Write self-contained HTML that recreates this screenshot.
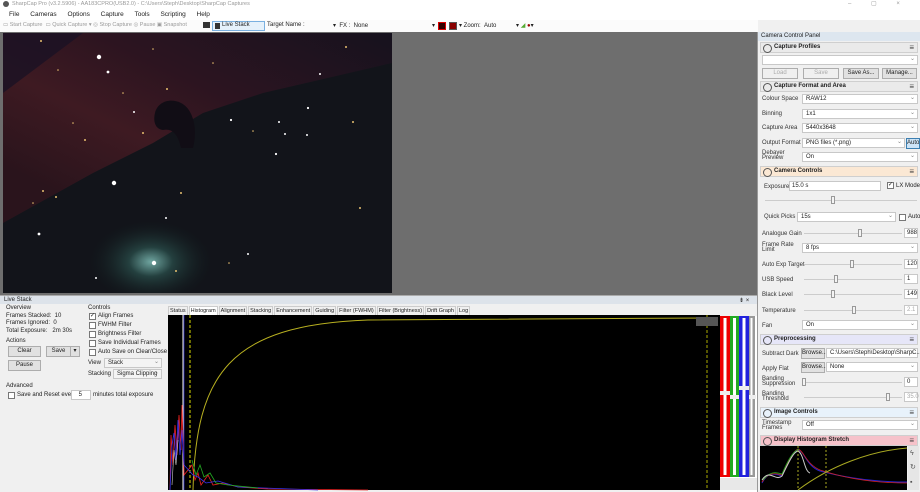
<!DOCTYPE html>
<html><head><meta charset="utf-8"><style>
*{margin:0;padding:0;box-sizing:border-box}
body{width:920px;height:492px;overflow:hidden;background:#f0f0f0;font-family:"Liberation Sans",sans-serif;font-size:6.5px;color:#222;position:relative}
.a{position:absolute;white-space:nowrap}
.cb{position:absolute;background:#fff;border:1px solid #c8c8c8;height:10px;padding-left:3px;line-height:8px;font-size:6px}
.cb:after{content:"⌄";position:absolute;right:2px;top:-1px;color:#888;font-size:6px}
.hd{position:absolute;left:760px;width:158px;height:11px;border:1px solid #cfcfcf;font-weight:bold;font-size:6px;line-height:9px;padding-left:13px}
.hd:before{content:"";position:absolute;left:2px;top:1px;width:7px;height:7px;border:1px solid #555;border-radius:50%}
.hd:after{content:"≡";position:absolute;right:3px;top:0;font-size:8px;line-height:9px;font-weight:normal;color:#444}
.lb{position:absolute;left:762px;font-size:6px;line-height:6px;color:#333}
.btn{position:absolute;background:#e1e1e1;border:1px solid #adadad;text-align:center;font-size:6px;line-height:9px}
.sl{position:absolute;height:1px;background:#ccc}
.th{position:absolute;width:4px;height:8px;background:#f4f4f4;border:1px solid #999}
.nb{position:absolute;background:#fff;border:1px solid #c8c8c8;height:10px;width:14px;font-size:6px;line-height:8px;padding-left:2px}
.chk{position:absolute;width:7px;height:7px;border:1px solid #777;background:#fff}
.tab{display:inline-block;border:1px solid #ccc;border-bottom:none;padding:0 1px;height:9px;line-height:9px;font-size:5.5px;background:#f0f0f0;margin-right:1px}
</style></head><body>
<div class="a" style="left:0;top:0;width:920px;height:9px;background:#fff"></div>
<div class="a" style="left:3px;top:1px;width:6px;height:6px;border-radius:50%;background:#555"></div>
<div class="a" style="left:12px;top:1px;font-size:5.5px;color:#999">SharpCap Pro (v3.2.5906) - AA183CPRO(USB2.0) - C:\Users\Steph\Desktop\SharpCap Captures</div>
<div class="a" style="left:848px;top:0;font-size:6px;color:#999;word-spacing:18px">– ▢ ×</div>
<div class="a" style="left:0;top:9px;width:920px;height:11px;background:#fff"></div>
<div class="a" style="left:9px;top:11px;font-size:6.5px;word-spacing:9px">File Cameras Options Capture Tools Scripting Help</div>
<div class="a" style="left:0;top:20px;width:758px;height:12px;background:#fbfbfb"></div>
<div class="a" style="left:3px;top:22px;font-size:5.5px;color:#999">▭ Start Capture &nbsp;▭ Quick Capture ▾ ◎ Stop Capture ◎ Pause ▣ Snapshot</div>
<div class="a" style="left:203px;top:22px;width:7px;height:6px;background:#333"></div>
<div class="a" style="left:212px;top:21px;width:53px;height:10px;border:1px solid #7ab0e0;background:#e5f1fb"></div>
<div class="a" style="left:215px;top:23px;width:5px;height:6px;background:#333"></div>
<div class="a" style="left:222px;top:22px;font-size:6px">Live Stack</div>
<div class="a" style="left:267px;top:22px;font-size:6px">Target Name :</div>
<div class="a" style="left:333px;top:22px;font-size:6px">▾ &nbsp;FX : &nbsp;None</div>
<div class="a" style="left:432px;top:22px;font-size:6px">▾</div>
<div class="a" style="left:438px;top:22px;width:8px;height:8px;background:#300;border:1px solid #d00"></div>
<div class="a" style="left:449px;top:22px;width:8px;height:8px;background:#800;border:1px solid #555"></div>
<div class="a" style="left:459px;top:22px;font-size:6px">▾ Zoom: &nbsp;Auto</div>
<div class="a" style="left:516px;top:22px;font-size:6px">▾ <span style="color:#5a3">◢</span> <span style="color:#900">●</span>▾</div>
<div class="a" style="left:0;top:32px;width:758px;height:263px;background:#6e6e6e"></div>
<svg class="a" style="left:3px;top:33px" width="389" height="260">
<defs>
<linearGradient id="r1" x1="0" y1="1" x2="1" y2="0"><stop offset="0.15" stop-color="#2a141c"/><stop offset="0.4" stop-color="#3e1a22"/><stop offset="0.62" stop-color="#2c1420"/><stop offset="1" stop-color="#16121e"/></linearGradient>
<radialGradient id="g1" cx="0.38" cy="0.88" r="0.16"><stop offset="0" stop-color="#6fa5a0"/><stop offset="0.35" stop-color="#24403f"/><stop offset="1" stop-color="#111a1c" stop-opacity="0"/></radialGradient>
</defs>
<rect width="389" height="260" fill="#12141a"/>
<polygon points="0,0 389,0 389,30 260,60 200,80 150,110 90,140 0,190" fill="url(#r1)"/>
<polygon points="0,0 80,0 0,60" fill="#1a1224" opacity="0.8"/>
<rect width="389" height="260" fill="url(#g1)"/>
<path d="M152,80 C155,68 168,65 178,70 C190,76 195,95 190,115 L178,115 C175,100 168,95 160,97 C152,96 150,88 152,80Z" fill="#110d15"/>
<g fill="#fff">
<circle cx="96" cy="24" r="2.2"/><circle cx="105" cy="39" r="1.4"/><circle cx="111" cy="150" r="2.2"/><circle cx="36" cy="201" r="1.4"/><circle cx="151" cy="230" r="2.2"/><circle cx="228" cy="87" r="1.1"/><circle cx="305" cy="75" r="1.1"/><circle cx="273" cy="121" r="1.1"/><circle cx="282" cy="101" r="1"/><circle cx="304" cy="102" r="1"/><circle cx="317" cy="41" r="1"/><circle cx="245" cy="221" r="1"/><circle cx="93" cy="245" r="1"/><circle cx="163" cy="185" r="1"/><circle cx="131" cy="79" r="1"/><circle cx="276" cy="89" r="1"/>
</g>
<g fill="#e8c070">
<circle cx="38" cy="8" r="1"/><circle cx="164" cy="56" r="1"/><circle cx="350" cy="89" r="1"/><circle cx="357" cy="175" r="1"/><circle cx="178" cy="160" r="1"/><circle cx="53" cy="164" r="1"/><circle cx="82" cy="107" r="1"/><circle cx="140" cy="100" r="1"/><circle cx="173" cy="238" r="1"/><circle cx="343" cy="14" r="1"/><circle cx="226" cy="230" r="0.8"/><circle cx="40" cy="158" r="1"/><circle cx="55" cy="37" r="0.8"/><circle cx="150" cy="16" r="0.8"/><circle cx="30" cy="170" r="0.8"/><circle cx="70" cy="90" r="0.8"/><circle cx="120" cy="60" r="0.8"/><circle cx="210" cy="30" r="0.8"/><circle cx="250" cy="98" r="0.8"/>
</g>
</svg>
<div class="a" style="left:0;top:295px;width:758px;height:197px;background:#f0f0f0;border-top:1px solid #aaa"></div>
<div class="a" style="left:0;top:296px;width:758px;height:8px;background:#dde3ea"></div>
<div class="a" style="left:4px;top:297px;font-size:6px">Live Stack</div>
<div class="a" style="left:739px;top:297px;font-size:6px">⇟ ×</div>
<div class="a" style="left:6px;top:305px;font-size:6px;line-height:7.5px">Overview<br>Frames Stacked: &nbsp;10<br>Frames Ignored: &nbsp;0<br>Total Exposure: &nbsp;&nbsp;2m 30s</div>
<div class="a" style="left:6px;top:338px;font-size:6px">Actions</div>
<div class="btn" style="left:8px;top:346px;width:33px;height:11px">Clear</div>
<div class="btn" style="left:46px;top:346px;width:25px;height:11px">Save</div>
<div class="btn" style="left:70px;top:346px;width:10px;height:11px">▾</div>
<div class="btn" style="left:8px;top:360px;width:33px;height:11px">Pause</div>
<div class="a" style="left:6px;top:383px;font-size:6px">Advanced</div>
<div class="chk" style="left:8px;top:392px"></div>
<div class="a" style="left:17px;top:392px;font-size:6px">Save and Reset every</div>
<div class="nb" style="left:71px;top:390px;width:20px;text-align:right;padding-right:8px">5</div>
<div class="a" style="left:93px;top:392px;font-size:6px">minutes total exposure</div>
<div class="a" style="left:88px;top:305px;font-size:6px">Controls</div>
<div class="chk" style="left:89px;top:313px;font-size:6px;line-height:5px">✓</div><div class="a" style="left:98px;top:313px;font-size:6px">Align Frames</div>
<div class="chk" style="left:89px;top:322px"></div><div class="a" style="left:98px;top:322px;font-size:6px">FWHM Filter</div>
<div class="chk" style="left:89px;top:331px"></div><div class="a" style="left:98px;top:331px;font-size:6px">Brightness Filter</div>
<div class="chk" style="left:89px;top:340px"></div><div class="a" style="left:98px;top:340px;font-size:6px">Save Individual Frames</div>
<div class="chk" style="left:89px;top:349px"></div><div class="a" style="left:98px;top:349px;font-size:6px">Auto Save on Clear/Close</div>
<div class="a" style="left:88px;top:360px;font-size:6px">View</div>
<div class="cb" style="left:104px;top:358px;width:58px;background:#f4f4f4">Stack</div>
<div class="a" style="left:88px;top:371px;font-size:6px">Stacking</div>
<div class="cb" style="left:113px;top:369px;width:49px;background:#f4f4f4">Sigma Clipping</div>
<div class="a" style="left:168px;top:306px"><span class="tab">Status</span><span class="tab" style="background:#fff">Histogram</span><span class="tab">Alignment</span><span class="tab">Stacking</span><span class="tab">Enhancement</span><span class="tab">Guiding</span><span class="tab">Filter (FWHM)</span><span class="tab">Filter (Brightness)</span><span class="tab">Drift Graph</span><span class="tab">Log</span></div>
<svg class="a" style="left:168px;top:315px" width="590" height="177">
<rect width="552" height="175" fill="#000"/>
<path d="M25,175 C28,60 60,10 200,5 L540,3" stroke="#b8b020" fill="none" stroke-width="1"/>
<line x1="15" y1="0" x2="15" y2="175" stroke="#ffe" stroke-width="1"/>
<line x1="16" y1="0" x2="16" y2="175" stroke="#33f" stroke-width="0.6"/>
<line x1="22" y1="0" x2="22" y2="175" stroke="#dd0" stroke-dasharray="3,2" stroke-width="1"/>
<line x1="539" y1="0" x2="539" y2="175" stroke="#aa0" stroke-dasharray="3,2" stroke-width="1"/>
<path d="M2,175 L3,120 5,150 7,110 9,140 11,100 13,135 14,90 16,160 24,150 27,165 30,158 33,170 40,160 45,170 55,168 70,172 100,174 200,175" stroke="#e22" fill="none" stroke-width="0.8"/>
<path d="M2,175 L4,130 6,118 8,145 10,105 12,140 14,115 16,150 25,160 30,162 38,168 50,166 70,172 150,175" stroke="#33e" fill="none" stroke-width="0.8"/>
<path d="M24,145 L28,160 32,150 36,162 42,158 48,168 60,170 90,173" stroke="#2a2" fill="none" stroke-width="0.8"/>
<path d="M4,170 L6,135 8,150 10,125" stroke="#ccc" fill="none" stroke-width="0.6"/>
<rect x="528" y="2" width="22" height="9" fill="#555"/>
<g transform="translate(552,1)">
<rect width="38" height="176" fill="#fff"/>
<rect x="0" y="0" width="10" height="161" fill="#e00"/><rect x="3.5" y="2" width="3" height="157" fill="#fff"/>
<rect x="10" y="0" width="9" height="161" fill="#2a2"/><rect x="13" y="2" width="3" height="157" fill="#fff"/>
<rect x="19" y="0" width="10" height="161" fill="#22d"/><rect x="22.5" y="2" width="3" height="157" fill="#fff"/>
<rect x="29" y="0" width="6" height="161" fill="#999"/><rect x="30.5" y="2" width="2" height="157" fill="#fff"/>
<rect x="0" y="75" width="10" height="4" fill="#eee"/><rect x="10" y="79" width="9" height="4" fill="#eee"/><rect x="19" y="70" width="10" height="4" fill="#eee"/><rect x="29" y="79" width="7" height="4" fill="#eee"/>
<rect x="0" y="162" width="38" height="12" fill="#e8e8e8"/>
</g>
</svg>
<div class="a" style="left:757px;top:32px;width:1px;height:460px;background:#999"></div>
<div class="a" style="left:758px;top:32px;width:162px;height:9px;background:#dde6ef"></div>
<div class="a" style="left:761px;top:33px;font-size:6px">Camera Control Panel</div>
<div class="hd" style="top:42px;background:#eaeaea">Capture Profiles</div>
<div class="cb" style="left:762px;top:55px;width:156px"></div>
<div class="btn" style="left:762px;top:68px;width:36px;color:#aaa;background:#f0f0f0">Load</div>
<div class="btn" style="left:803px;top:68px;width:36px;color:#aaa;background:#f0f0f0">Save</div>
<div class="btn" style="left:843px;top:68px;width:36px">Save As...</div>
<div class="btn" style="left:882px;top:68px;width:35px">Manage...</div>
<div class="hd" style="top:81px;background:#eaeaea">Capture Format and Area</div>
<div class="lb" style="top:96px">Colour Space</div><div class="cb" style="left:802px;top:94px;width:116px">RAW12</div>
<div class="lb" style="top:111px">Binning</div><div class="cb" style="left:802px;top:109px;width:116px">1x1</div>
<div class="lb" style="top:125px">Capture Area</div><div class="cb" style="left:802px;top:123px;width:116px">5440x3648</div>
<div class="lb" style="top:140px">Output Format</div><div class="cb" style="left:802px;top:138px;width:103px">PNG files (*.png)</div>
<div class="btn" style="left:906px;top:138px;width:14px;background:#cde4f7;border-color:#3c7fb1">Auto</div>
<div class="lb" style="top:151px;line-height:5px">Debayer<br>Preview</div><div class="cb" style="left:802px;top:152px;width:116px">On</div>
<div class="hd" style="top:166px;background:#fbe8d4">Camera Controls</div>
<div class="lb" style="top:184px;left:764px">Exposure</div>
<div class="a" style="left:789px;top:181px;width:92px;height:10px;background:#fff;border:1px solid #c8c8c8;font-size:6px;padding-left:2px;line-height:8px">15.0 s</div>
<div class="chk" style="left:887px;top:182px;font-size:6px;line-height:5px">✓</div><div class="a" style="left:896px;top:183px;font-size:6px">LX Mode</div>
<div class="sl" style="left:765px;top:200px;width:152px"></div><div class="th" style="left:831px;top:196px"></div>
<div class="lb" style="top:214px;left:764px">Quick Picks</div><div class="cb" style="left:797px;top:212px;width:99px">15s</div>
<div class="chk" style="left:899px;top:214px"></div><div class="a" style="left:908px;top:214px;font-size:6px">Auto</div>
<div class="lb" style="top:231px">Analogue Gain</div><div class="sl" style="left:804px;top:233px;width:98px"></div><div class="th" style="left:858px;top:229px"></div><div class="nb" style="left:904px;top:228px">988</div>
<div class="lb" style="top:243px;line-height:5px">Frame Rate<br>Limit</div><div class="cb" style="left:802px;top:243px;width:116px">8 fps</div>
<div class="lb" style="top:262px">Auto Exp Target</div><div class="sl" style="left:804px;top:264px;width:98px"></div><div class="th" style="left:850px;top:260px"></div><div class="nb" style="left:904px;top:259px">120</div>
<div class="lb" style="top:277px">USB Speed</div><div class="sl" style="left:804px;top:279px;width:98px"></div><div class="th" style="left:834px;top:275px"></div><div class="nb" style="left:904px;top:274px">1</div>
<div class="lb" style="top:292px">Black Level</div><div class="sl" style="left:804px;top:294px;width:98px"></div><div class="th" style="left:831px;top:290px"></div><div class="nb" style="left:904px;top:289px">149</div>
<div class="lb" style="top:308px">Temperature</div><div class="sl" style="left:804px;top:310px;width:98px"></div><div class="th" style="left:852px;top:306px"></div><div class="nb" style="left:904px;top:305px;color:#aaa">2.1</div>
<div class="lb" style="top:323px">Fan</div><div class="cb" style="left:802px;top:320px;width:116px">On</div>
<div class="hd" style="top:334px;background:#e6e6f8">Preprocessing</div>
<div class="lb" style="top:351px">Subtract Dark</div><div class="btn" style="left:801px;top:348px;width:24px">Browse...</div><div class="cb" style="left:826px;top:348px;width:92px">C:\Users\Steph\Desktop\SharpC...</div>
<div class="lb" style="top:366px">Apply Flat</div><div class="btn" style="left:801px;top:362px;width:24px">Browse...</div><div class="cb" style="left:826px;top:362px;width:92px">None</div>
<div class="lb" style="top:377px;line-height:5px">Banding<br>Suppression</div><div class="sl" style="left:804px;top:382px;width:98px"></div><div class="th" style="left:802px;top:378px"></div><div class="nb" style="left:904px;top:377px">0</div>
<div class="lb" style="top:392px;line-height:5px">Banding<br>Threshold</div><div class="sl" style="left:804px;top:397px;width:98px"></div><div class="th" style="left:886px;top:393px"></div><div class="nb" style="left:904px;top:392px;color:#aaa">35.0</div>
<div class="hd" style="top:407px;background:#e8f2fb">Image Controls</div>
<div class="lb" style="top:421px;line-height:5px">Timestamp<br>Frames</div><div class="cb" style="left:802px;top:420px;width:116px">Off</div>
<div class="hd" style="top:435px;background:#f6c2ca">Display Histogram Stretch</div>
<svg class="a" style="left:760px;top:446px" width="160" height="46">
<rect width="147" height="44" fill="#000"/>
<path d="M2,37 C8,25 15,28 22,30 C28,18 32,5 38,4 C44,4 46,20 60,25 C90,33 120,36 147,36" stroke="#22c" fill="none" stroke-width="1"/>
<path d="M2,36 C8,26 15,27 22,29 C28,16 33,5 38,3 C44,5 46,18 60,24 C90,34 120,37 147,37" stroke="#c22" fill="none" stroke-width="0.8"/>
<path d="M3,34 C10,25 16,26 22,28 C28,14 33,5 39,3" stroke="#2a2" fill="none" stroke-width="0.8"/>
<path d="M2,34 C10,22 15,36 22,30 C28,18 33,6 38,5 C44,8 44,25 50,27" stroke="#ccc" fill="none" stroke-width="1"/>
<path d="M38,44 C70,20 110,5 147,2" stroke="#aa2" fill="none"/>
<line x1="38" y1="0" x2="38" y2="44" stroke="#aa2" stroke-dasharray="2,2"/>
<line x1="66" y1="0" x2="66" y2="44" stroke="#aa2" stroke-dasharray="2,2"/>
<rect x="148" y="0" width="11" height="44" fill="#e6e6e6"/>
<text x="150" y="9" font-size="7" fill="#555">ϟ</text><text x="150" y="23" font-size="7" fill="#555">↻</text><text x="150" y="38" font-size="7" fill="#555">▪</text>
</svg>
</body></html>
